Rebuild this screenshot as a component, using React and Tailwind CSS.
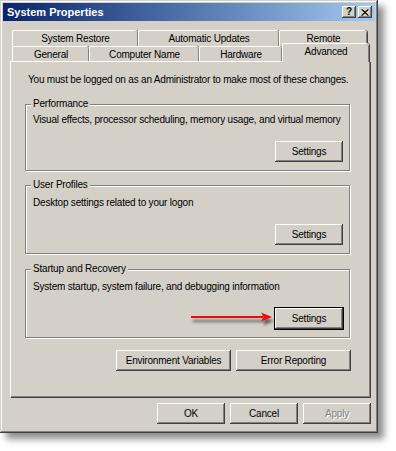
import React from 'react';

const btn =
  'flex items-center justify-center bg-[#d4d0c8] text-black shadow-[inset_-1px_-1px_#404040,inset_1px_1px_#fff,inset_-2px_-2px_#808080,inset_2px_2px_#d4d0c8]';

const Button = ({ children, className = '', focused = false, disabled = false }) => (
  <div className={`${btn} h-[21px] ${focused ? 'outline outline-1 outline-black' : ''} ${className}`}>
    <span className={disabled ? 'text-[#808080] [text-shadow:1px_1px_#fff]' : ''}>{children}</span>
  </div>
);

const GroupBox = ({ label, text, height, textTop, focused = false }) => (
  <div
    className={`relative ml-[14px] w-[325px] border border-[#808080] shadow-[inset_1px_1px_#fff,1px_1px_#fff] flex flex-col ${height}`}
  >
    <span className="absolute left-[5px] top-[-8px] bg-[#d4d0c8] px-[2px] leading-[14px]">{label}</span>
    <p className={`pl-[7px] leading-[13px] ${textTop}`}>{text}</p>
    <div className="mt-auto mb-[8px] mr-[6px] flex justify-end">
      <Button focused={focused} className="w-[68px]">Settings</Button>
    </div>
  </div>
);

const tabBase =
  'flex items-center justify-center bg-[#d4d0c8] border-t border-l border-white rounded-tl-[2px] rounded-tr-[3px] shadow-[inset_-1px_0_#808080,1px_0_#404040]';

const App = () => {
  return (
    <div className="w-[396px] h-[451px] bg-white relative font-['Liberation_Sans',Arial,sans-serif] text-[10px] tracking-[-0.2px] text-black">
      <div className="w-[378px] h-[433px] bg-[#d4d0c8] flex flex-col shadow-[inset_-1px_-1px_#404040,inset_1px_1px_#d4d0c8,inset_-2px_-2px_#808080,inset_2px_2px_#fff,6px_6px_7px_rgba(0,0,0,0.45)]">
        {/* title bar */}
        <div className="mx-[3px] mt-[3px] h-[18px] flex items-center bg-gradient-to-r from-[#0a246a] to-[#a6caf0]">
          <span className="pl-[4px] font-bold text-white text-[11px] tracking-normal">System Properties</span>
          <div className="ml-auto mr-[3px] flex gap-[2px]">
            <div className={`${btn} w-[14px] h-[12px]`}>
              <span className="font-bold text-[10px] leading-none tracking-normal">?</span>
            </div>
            <div className={`${btn} w-[14px] h-[12px]`}>
              <svg width="8" height="7" viewBox="0 0 8 7">
                <path d="M0.5 0.5 L7 6.5 M1.5 0.5 L7.5 6.5 M7 0.5 L0.5 6.5 M7.5 0.5 L1 6.5" stroke="#000" strokeWidth="1" />
              </svg>
            </div>
          </div>
        </div>

        {/* tabs */}
        <div className="mx-[10px] mt-[9px] w-[360px]">
          <div className="ml-[2px] flex h-[16px]">
            <div className={`${tabBase} w-[126px]`}>System Restore</div>
            <div className={`${tabBase} w-[141px]`}>Automatic Updates</div>
            <div className={`${tabBase} w-[88px]`}>Remote</div>
          </div>
          <div className="ml-[2px] flex items-end h-[15px]">
            <div className={`${tabBase} w-[77px] h-[15px]`}>General</div>
            <div className={`${tabBase} w-[110px] h-[15px]`}>Computer Name</div>
            <div className={`${tabBase} w-[83px] h-[15px]`}>Hardware</div>
            <div className={`${tabBase} relative z-10 w-[87px] h-[19px] -mb-px pb-[3px]`}>Advanced</div>
          </div>

          {/* panel */}
          <div className="h-[336px] flex flex-col border-t border-l border-white shadow-[inset_-1px_-1px_#808080,1px_1px_#404040]">
            <p className="pl-[17px] pt-[11px] leading-[13px]">
              You must be logged on as an Administrator to make most of these changes.
            </p>
            <div className="mt-[18px]">
              <GroupBox
                label="Performance"
                text="Visual effects, processor scheduling, memory usage, and virtual memory"
                height="h-[67px]"
                textTop="pt-[8px]"
              />
            </div>
            <div className="mt-[14px]">
              <GroupBox
                label="User Profiles"
                text="Desktop settings related to your logon"
                height="h-[69px]"
                textTop="pt-[10px]"
              />
            </div>
            <div className="mt-[15px] relative">
              <GroupBox
                label="Startup and Recovery"
                text="System startup, system failure, and debugging information"
                height="h-[69px]"
                textTop="pt-[10px]"
                focused
              />
              {/* annotation arrow */}
              <svg
                className="absolute left-[178px] top-[41px]"
                width="90"
                height="18"
                viewBox="0 0 90 18"
              >
                <defs>
                  <filter id="sh" x="-10%" y="-50%" width="130%" height="250%">
                    <feGaussianBlur in="SourceAlpha" stdDeviation="1.6" />
                    <feOffset dx="2" dy="4" result="b" />
                    <feComponentTransfer>
                      <feFuncA type="linear" slope="0.55" />
                    </feComponentTransfer>
                    <feMerge>
                      <feMergeNode />
                      <feMergeNode in="SourceGraphic" />
                    </feMerge>
                  </filter>
                </defs>
                <g filter="url(#sh)">
                  <path d="M2 7 L74 7" stroke="#e81010" strokeWidth="2" />
                  <path d="M72 2.5 L83 7 L72 11.5 L74.5 7 Z" fill="#e81010" />
                </g>
              </svg>
            </div>
            <div className="mt-[12px] ml-[105px] flex gap-[5px]">
              <Button className="w-[115px]">Environment Variables</Button>
              <Button className="w-[115px]">Error Reporting</Button>
            </div>
          </div>
        </div>

        {/* footer */}
        <div className="mt-[6px] mr-[7px] flex justify-end gap-[5px]">
          <Button className="w-[68px]">OK</Button>
          <Button className="w-[68px]">Cancel</Button>
          <Button disabled className="w-[68px]">Apply</Button>
        </div>
      </div>
    </div>
  );
};

export default App;
